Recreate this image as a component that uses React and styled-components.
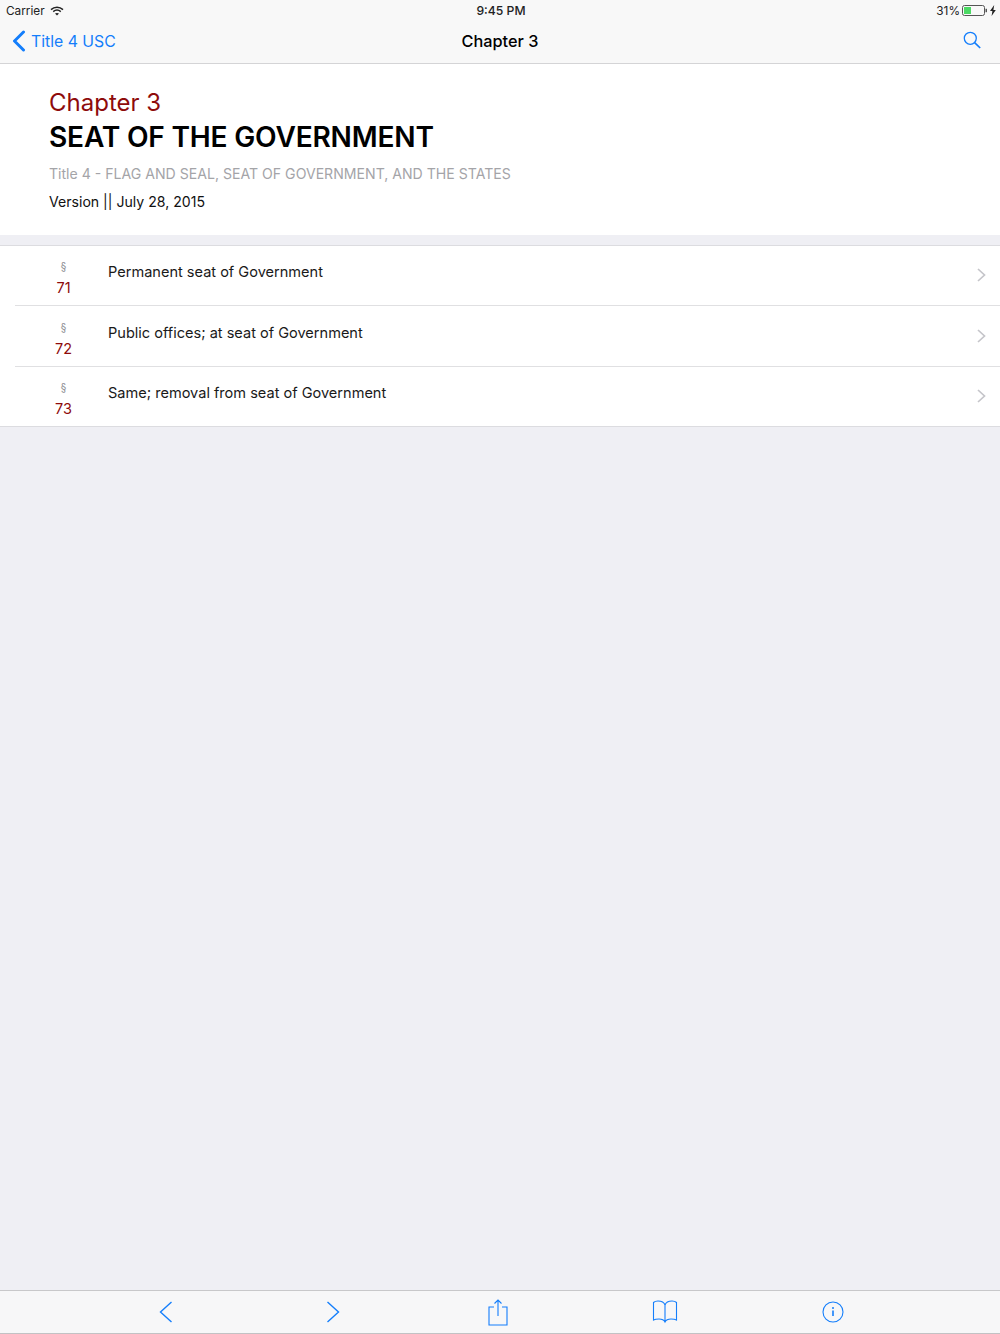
import React from "react";
import styled, { createGlobalStyle } from "styled-components";

const Global = createGlobalStyle`
  html, body { margin: 0; padding: 0; background: #efeff4; }
  body { font-family: Inter, "Liberation Sans", sans-serif; }
`;

const BLUE = "#147efb";

const Page = styled.div`
  width: 1000px;
  height: 1334px;
  display: flex;
  flex-direction: column;
  overflow: hidden;
  background: #efeff4;
`;

const TopBar = styled.div`
  height: 63px;
  flex: none;
  background: #f8f8f8;
  border-bottom: 1px solid #d4d4d6;
`;

const StatusBar = styled.div`
  height: 20px;
  display: grid;
  grid-template-columns: 1fr auto 1fr;
  align-items: center;
  padding: 0 4px 0 6px;
  font-size: 11.8px;
  color: #222;
`;

const StatusLeft = styled.div`
  display: flex;
  align-items: center;
  gap: 5px;
  padding-top: 1px;
`;

const StatusTime = styled.div`
  font-weight: 500;
  font-size: 12.2px;
`;

const StatusRight = styled.div`
  display: flex;
  align-items: center;
  justify-content: flex-end;
  gap: 2px;
  padding-top: 1px;
`;

const NavBar = styled.div`
  height: 41px;
  display: grid;
  grid-template-columns: 1fr auto 1fr;
  align-items: center;
  padding: 0 12px;
`;

const BackLink = styled.div`
  display: flex;
  align-items: center;
  gap: 5px;
  padding-top: 1px;
  color: ${BLUE};
  font-size: 15.8px;
`;

const NavTitle = styled.div`
  font-size: 16.3px;
  font-weight: 500;
  color: #000;
`;

const NavAction = styled.div`
  display: flex;
  justify-content: flex-end;
  padding: 0 7px 2px 0;
`;

const Header = styled.header`
  height: 171px;
  flex: none;
  box-sizing: border-box;
  background: #fff;
  padding: 24px 49px 0;
`;

const ChapterLabel = styled.div`
  font-size: 24px;
  line-height: 30px;
  color: #8e0b0b;
`;

const ChapterTitle = styled.h1`
  margin: 2px 0 0;
  font-size: 28.1px;
  line-height: 34px;
  font-weight: 600;
  color: #000;
  letter-spacing: -0.2px;
`;

const TitleLine = styled.div`
  margin-top: 11px;
  font-size: 14.1px;
  line-height: 18px;
  color: #a4a4a8;
`;

const VersionLine = styled.div`
  margin-top: 10px;
  font-size: 14.1px;
  line-height: 18px;
  color: #111;
`;

const List = styled.ul`
  list-style: none;
  margin: 10px 0 0;
  padding: 0;
  background: #fff;
  border-top: 1px solid #dcdce0;
  border-bottom: 1px solid #dcdce0;
`;

const Row = styled.li`
  height: ${(p) => (p.$first ? "59.4px" : "60.3px")};
  display: flex;
  align-items: flex-start;
  margin-left: 15px;
  padding-right: 14px;
  box-sizing: border-box;
  border-top: ${(p) => (p.$first ? "none" : "1px solid #e0e0e2")};
`;

const SectionCol = styled.div`
  width: 93px;
  flex: none;
  box-sizing: border-box;
  padding-left: 4px;
  display: flex;
  flex-direction: column;
  align-items: center;
`;

const SectionMark = styled.div`
  margin-top: 14.2px;
  font-size: 10px;
  line-height: 12px;
  color: #8d8d92;
`;

const SectionNumber = styled.div`
  margin-top: 7px;
  font-size: 14.5px;
  line-height: 18px;
  color: #8e0b0b;
`;

const RowLabel = styled.div`
  flex: 1;
  margin-top: 17.2px;
  font-size: 14.55px;
  line-height: 18px;
  color: #1a1a1a;
`;

const RowChevron = styled.div`
  align-self: center;
  display: flex;
  margin-top: -1px;
`;

const Spacer = styled.div`
  flex: 1;
`;

const Toolbar = styled.nav`
  height: 44px;
  flex: none;
  box-sizing: border-box;
  background: #f7f7f8;
  border-top: 1px solid #c8c8ca;
  border-bottom: 1px solid #c2c2c4;
  display: grid;
  grid-template-columns: repeat(5, 166.6px);
  justify-content: center;
  align-items: center;
`;

const ToolButton = styled.div`
  display: flex;
  justify-content: center;
  align-items: center;
  padding-right: ${(p) => p.$nudge || 0}px;
`;

const Wifi = () => (
  <svg width="14" height="10" viewBox="0 0 14 10" fill="none" stroke="#222" strokeWidth="1.5">
    <path d="M1 3.6C4.4.5 9.6.5 13 3.6" />
    <path d="M3.2 5.6c2.2-1.8 5.4-1.8 7.6 0" />
    <path d="M7 9.6 5 7.6c1.2-.8 2.8-.8 4 0z" fill="#222" stroke="none" />
  </svg>
);

const Battery = () => (
  <svg width="34" height="11" viewBox="0 0 34 11">
    <rect x="0.5" y="0.5" width="22" height="10" rx="2" fill="none" stroke="#555" />
    <rect x="2" y="2" width="7" height="7" fill="#4cd964" />
    <rect x="23.5" y="3.8" width="1.5" height="3.4" fill="#555" />
    <path d="M32.2 0 28 6h2.4l-.8 5 4.2-6h-2.4z" fill="#222" />
  </svg>
);

const BackChevron = () => (
  <svg width="14" height="22" viewBox="0 0 14 22" fill="none" stroke={BLUE} strokeWidth="3" strokeLinecap="round" strokeLinejoin="round">
    <path d="M11.5 2 2.5 11l9 9" />
  </svg>
);

const Search = () => (
  <svg width="18" height="18" viewBox="0 0 18 18" fill="none" stroke={BLUE} strokeWidth="1.3">
    <circle cx="7.3" cy="7.3" r="6" />
    <path d="m11.6 11.6 5.6 5.4" strokeWidth="1.7" />
  </svg>
);

const Chevron = () => (
  <svg width="9" height="14" viewBox="0 0 9 14" fill="none" stroke="#c5c5ca" strokeWidth="1.7">
    <path d="m1 1 6.5 6L1 13" />
  </svg>
);

const ToolBack = () => (
  <svg width="14" height="22" viewBox="0 0 14 22" fill="none" stroke={BLUE} strokeWidth="1.4">
    <path d="M12.5 1 1.5 11l11 10" />
  </svg>
);

const ToolForward = () => (
  <svg width="14" height="22" viewBox="0 0 14 22" fill="none" stroke={BLUE} strokeWidth="1.4">
    <path d="m1.5 1 11 10-11 10" />
  </svg>
);

const Share = () => (
  <svg width="20" height="27" viewBox="0 0 20 27" fill="none" stroke={BLUE} strokeWidth="1.1">
    <path d="M6 8H1v18h18V8h-5" />
    <path d="M10 17V1M6.500 4.500 10 1l3.500 3.500" />
  </svg>
);

const Book = () => (
  <svg width="26" height="24" viewBox="0 0 26 24" fill="none" stroke={BLUE} strokeWidth="1.1">
    <path d="M13 5C12 2 9 1 6 1 4 1 2.500 1.500 1.500 2.500V20C3 19.200 5 19 7 19c3 0 5 1 6 3 1-2 3-3 6-3 2 0 4 .2 5.500 1V2.500C23.500 1.500 22 1 20 1c-3 0-6 1-7 4v16" />
  </svg>
);

const Info = () => (
  <svg width="22" height="22" viewBox="0 0 22 22" fill="none" stroke={BLUE}>
    <circle cx="11" cy="11" r="10" strokeWidth="1.1" />
    <path d="M11 9.500V15" strokeWidth="1.6" />
    <circle cx="11" cy="7" r="1" fill={BLUE} stroke="none" />
  </svg>
);

const sections = [
  { num: "71", label: "Permanent seat of Government" },
  { num: "72", label: "Public offices; at seat of Government" },
  { num: "73", label: "Same; removal from seat of Government" },
];

export default function App() {
  return (
    <Page>
      <Global />
      <TopBar>
        <StatusBar>
          <StatusLeft>
            Carrier <Wifi />
          </StatusLeft>
          <StatusTime>9:45 PM</StatusTime>
          <StatusRight>
            31% <Battery />
          </StatusRight>
        </StatusBar>
        <NavBar>
          <BackLink>
            <BackChevron />
            Title 4 USC
          </BackLink>
          <NavTitle>Chapter 3</NavTitle>
          <NavAction>
            <Search />
          </NavAction>
        </NavBar>
      </TopBar>
      <Header>
        <ChapterLabel>Chapter 3</ChapterLabel>
        <ChapterTitle>SEAT OF THE GOVERNMENT</ChapterTitle>
        <TitleLine>Title 4 - FLAG AND SEAL, SEAT OF GOVERNMENT, AND THE STATES</TitleLine>
        <VersionLine>Version || July 28, 2015</VersionLine>
      </Header>
      <List>
        {sections.map((s, i) => (
          <Row key={s.num} $first={i === 0}>
            <SectionCol>
              <SectionMark>§</SectionMark>
              <SectionNumber>{s.num}</SectionNumber>
            </SectionCol>
            <RowLabel>{s.label}</RowLabel>
            <RowChevron>
              <Chevron />
            </RowChevron>
          </Row>
        ))}
      </List>
      <Spacer />
      <Toolbar>
        <ToolButton $nudge={2}><ToolBack /></ToolButton>
        <ToolButton $nudge={1}><ToolForward /></ToolButton>
        <ToolButton $nudge={4}><Share /></ToolButton>
        <ToolButton $nudge={4}><Book /></ToolButton>
        <ToolButton><Info /></ToolButton>
      </Toolbar>
    </Page>
  );
}
